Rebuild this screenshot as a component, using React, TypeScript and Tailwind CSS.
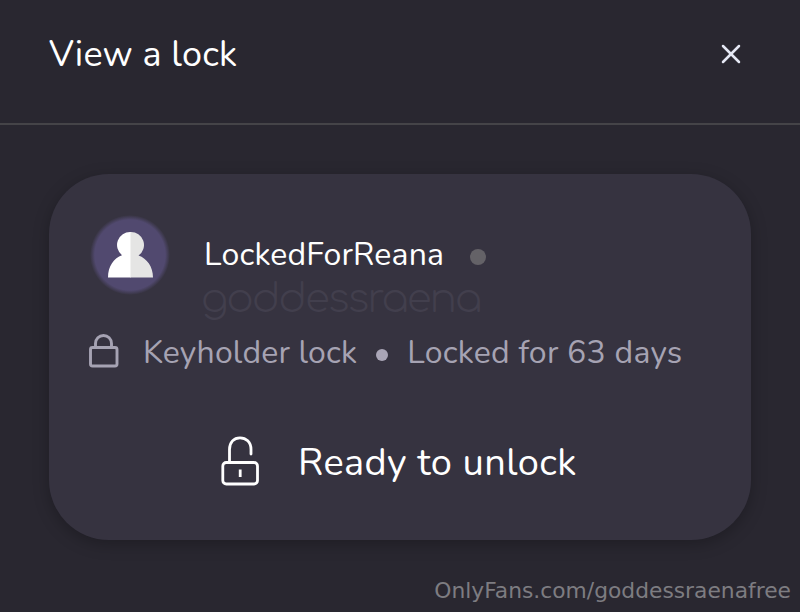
import { X } from 'lucide-react';

const Avatar = () => (
  <svg className="h-20 w-20 shrink-0" viewBox="0 0 80 80" fill="none" aria-hidden="true">
    <defs>
      <radialGradient id="avatar-glow">
        <stop offset="0.88" stopColor="#51496f" />
        <stop offset="1" stopColor="#51496f" stopOpacity="0" />
      </radialGradient>
    </defs>
    <circle cx="40" cy="40" r="40" fill="url(#avatar-glow)" />
    <path d="M41 17h-.5a13 13 0 0 0-8.5 23.2C24 43 18 51 18 62.5h23z" fill="#ffffff" />
    <path d="M40.5 17a13 13 0 0 1 8 23.6C57 43.5 63 52 63 62.5H40.5z" fill="#e5e5e4" />
  </svg>
)

const LockClosed = () => (
  <svg className="-mt-1 -ml-px mr-px h-9 w-8 shrink-0" viewBox="0 0 32 36" fill="none" stroke="#a6a3b3" strokeWidth={2.9} aria-hidden="true">
    <rect x="2.5" y="14.5" width="26.5" height="18.5" rx="2" />
    <path d="M7.5 14V10.5a8 8 0 0 1 16 0V14" />
  </svg>
)

const LockOpen = () => (
  <svg className="h-[52px] w-10 shrink-0" viewBox="0 0 40 52" fill="none" stroke="#ffffff" strokeWidth={2.8} strokeLinecap="round" aria-hidden="true">
    <rect x="2.8" y="27.5" width="34.7" height="21.5" rx="3.5" />
    <path d="M9.5 27V14.5C9.5 7 14 2.8 20 2.8s11 4.2 11 11.7V19" />
    <path d="M20.2 34.5v7.5" strokeLinecap="butt" />
  </svg>
)

const App = () => {
  return (
    <div className="relative flex h-[612px] w-[800px] flex-col overflow-hidden bg-[#292730] font-['Nunito','Lato',sans-serif] text-white">
      <header className="flex h-[125px] shrink-0 items-start justify-between border-b-2 border-[#454448] pr-[54px] pl-[49px] pt-[30px]">
        <h1 className="mt-px text-[36px] leading-12 tracking-[0.2px] whitespace-nowrap">View a lock</h1>
        <button type="button" className="mt-[9px]" aria-label="Close">
          <X className="-mt-px -mr-px h-8 w-8 text-[#e5e8f4]" strokeWidth={1.9} />
        </button>
      </header>

      <main className="px-[49px] pt-[49px]">
        <section className="flex h-[366px] w-[702px] flex-col rounded-[60px] bg-[#363340] px-[41px] pt-[41px] shadow-[0_4px_16px_rgba(0,0,0,0.25)]">
          <div className="relative flex h-20 items-center">
            <Avatar />
            <span className="ml-[34px] text-[32px] leading-10 tracking-[0.2px] whitespace-nowrap">LockedForReana</span>
            <span className="mt-1 ml-[26px] h-4 w-4 rounded-full bg-[#646267]" />
            <span className="absolute top-[58px] left-[111px] font-['Comfortaa','Quicksand','Lato',sans-serif] text-[40px] leading-[52px] font-thin tracking-[-1.7px] whitespace-nowrap text-[#423f4d]">
              goddessraena
            </span>
          </div>

          <div className="-ml-px mt-[38px] flex h-10 items-center text-[32px] leading-10 text-[#a6a3b3]">
            <LockClosed />
            <span className="ml-[22px] tracking-[0.2px] whitespace-nowrap">Keyholder lock</span>
            <span className="mt-1 ml-[19px] h-3 w-3 rounded-full bg-[#aaa6b7]" />
            <span className="ml-[19px] tracking-[0.25px] whitespace-nowrap">Locked for 63 days</span>
          </div>

          <div className="mt-[62px] ml-[130px] flex h-[52px] items-center">
            <LockOpen />
            <span className="mt-1 ml-[38px] text-[38px] leading-12 tracking-[0.4px] whitespace-nowrap">Ready to unlock</span>
          </div>
        </section>
      </main>

      <div className="absolute right-[9px] bottom-[7px] font-['DejaVu_Sans',sans-serif] text-[21.8px] leading-7 whitespace-nowrap text-[#7d7c81]">
        OnlyFans.com/goddessraenafree
      </div>
    </div>
  )
}

export default App;
